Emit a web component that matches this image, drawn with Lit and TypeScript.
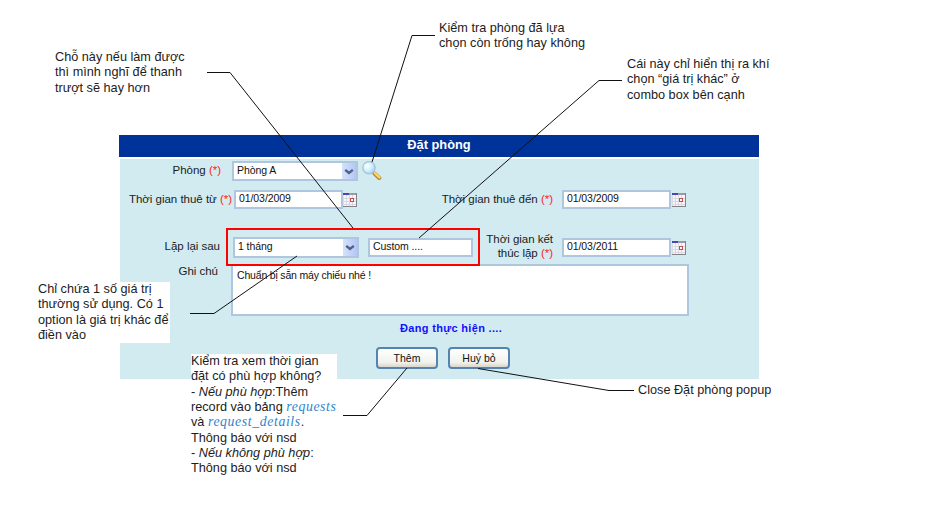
import { LitElement, html, css, svg } from "lit";
import { customElement, property } from "lit/decorators.js";

@customElement("calendar-icon")
class CalendarIcon extends LitElement {
  static styles = css`:host { display: block; width: 14px; height: 15px; } svg { display: block; }`;
  render() {
    return html`<svg width="14" height="15" viewBox="0 0 14 15" shape-rendering="crispEdges">
      <rect y="1" width="14" height="14" fill="#f7f6fa"/>
      <path d="M3.5 3v11M6.5 3v11M9.5 3v11M1 6.5h12M1 9.5h12M1 12.5h12" stroke="#d8d8e2"/>
      <path d="M.5 3v11" stroke="#dcdce8"/>
      <rect y="1" width="13" height="2" fill="#9d9b9f"/>
      <rect y="1" width="6" height="2" fill="#4646b4"/>
      <path d="M13.5 1v14M0 14.5h14" stroke="#858285"/>
      <rect x="7.5" y="6.5" width="3" height="3" fill="#fff" stroke="#c94b50"/>
    </svg>`;
  }
}

@customElement("search-icon")
class SearchIcon extends LitElement {
  static styles = css`:host { display: block; width: 20px; height: 20px; } svg { display: block; }`;
  render() {
    return html`<svg width="20" height="20" viewBox="0 0 20 20">
      <defs><radialGradient id="g" cx=".35" cy=".35" r=".7"><stop offset="0" stop-color="#fff"/><stop offset=".5" stop-color="#d5f1ff"/><stop offset="1" stop-color="#9bd3f5"/></radialGradient></defs>
      <path d="M12.500 12.500l4.800 4.500" stroke="#b5822f" stroke-width="4" stroke-linecap="round"/>
      <path d="M12.800 12.200l4.700 4.300" stroke="#fbd468" stroke-width="2.400" stroke-linecap="round"/>
      <circle cx="7" cy="6.800" r="6.200" fill="url(#g)" stroke="#a4c0d4" stroke-width="1.200"/>
    </svg>`;
  }
}

@customElement("text-field")
class TextField extends LitElement {
  @property() value = "";
  @property({ type: Boolean }) select = false;
  static styles = css`
    :host { display: flex; box-sizing: border-box; border: 2px solid #b0c6de; background: #fff; align-items: center; }
    span { flex: 1; padding: 0 0 2px 3px; font-size: 10.5px; line-height: 13px; letter-spacing: -.08px; white-space: nowrap; color: #111; }
    .arrow { width: 14px; align-self: stretch; display: flex; align-items: center; justify-content: center; background: linear-gradient(90deg, #d5e1fd, #b5c6f5); }
  `;
  render() {
    return html`<span>${this.value}</span>${this.select
      ? html`<div class="arrow"><svg width="10" height="7" viewBox="0 0 10 7"><path d="M1.200 1.800L5 5L8.800 1.800" fill="none" stroke="#4d6185" stroke-width="2.300"/></svg></div>`
      : ""}`;
  }
}

const lines = [
  "207,72.5 230,72.5 353,228",
  "435,35.5 412,35.5 372,162",
  "622,80.5 599,80.5 419,238",
  "190,313.5 214,313.5 297,256",
  "343,415.5 367,415.5 407,368",
  "634,390.500 609,390.500 478,368.500",
];

@customElement("app-root")
class AppRoot extends LitElement {
  static styles = css`
    :host { display: block; position: relative; width: 941px; height: 515px; overflow: hidden; background: #fff; font-family: "Liberation Sans", Arial, sans-serif; color: #1c1c1c; }
    .popup { width: 640px; padding: 135px 0 0 119px; }
    .title { height: 22px; line-height: 20px; background: #039; color: #fff; font-size: 12.800px; font-weight: bold; text-align: center; }
    .body { box-sizing: border-box; margin: 2px 0 0 1px; height: 220px; background: #d2ebf0; padding-top: 2px; }
    .row { display: flex; align-items: center; }
    .row1 { height: 20px; }
    .row2 { height: 19px; margin-top: 9px; }
    .row3 { height: 38px; margin-top: 19px; position: relative; z-index: 1; }
    .label { box-sizing: border-box; font-size: 11.5px; line-height: 14px; padding-bottom: 2px; text-align: right; white-space: nowrap; letter-spacing: -.02px; }
    .label i { font-style: normal; color: #f22; }
    .row1 .label { width: 101px; }
    .row1 text-field { width: 126px; height: 20px; margin: 0 4px 0 11px; }
    .row2 .from { width: 112px; }
    .row2 text-field, .row3 .until { width: 109px; height: 19px; }
    .row2 .start { margin-left: 2px; }
    .row2 .to { width: 196px; }
    .row2 .end { margin: 0 1px 0 9px; }
    .row3 .repeat { width: 100px; margin-right: 1px; }
    .group { box-sizing: border-box; display: flex; align-items: center; width: 254px; height: 38px; border: 2px solid #f00; margin-left: 5px; padding-left: 5px; }
    .group .period { width: 126px; height: 21px; }
    .group .custom { width: 105px; height: 19px; margin-left: 9px; }
    .row3 .finish { width: 73px; }
    .row3 .until { margin: 0 1px 0 9px; }
    .notes { display: flex; margin-top: -2px; }
    .notes .label { width: 98px; }
    .area { box-sizing: border-box; width: 458px; height: 52px; margin-left: 13px; border: 2px solid #b0c6de; background: #fff; padding: 2px 4px; font-size: 10.5px; line-height: 15px; letter-spacing: -.18px; color: #111; }
    .status { margin: 5px 0 0 280px; font-size: 11px; line-height: 15px; font-weight: bold; color: #11f; letter-spacing: .32px; }
    .buttons { display: flex; gap: 10px; margin: 11px 0 0 256px; }
    .button { box-sizing: border-box; width: 62px; height: 22px; border: 2px solid #5584b0; border-radius: 4px; background: linear-gradient(#fff, #f1f1ed 75%, #d8d6cc); padding: 0 0 1px; font: 10.500px/16px "Liberation Sans", sans-serif; color: #111; }
    .lines { position: absolute; inset: 0; z-index: 2; }
    .lines polyline { fill: none; stroke: #111; stroke-width: 1; }
    .callout { position: absolute; z-index: 3; font-size: 12.700px; line-height: 15.330px; white-space: nowrap; }
    .n1 { left: 55px; top: 50px; }
    .n2 { left: 439px; top: 21px; }
    .n3 { left: 627px; top: 57px; }
    .n4 { left: 38px; top: 282px; width: 132px; background: #fff; }
    .n5 { left: 191px; top: 354px; width: 146px; background: #fff; }
    .n6 { left: 638px; top: 383px; }
    .code { font-family: "Liberation Serif", serif; font-style: italic; color: #2e86cd; font-size: 13.800px; line-height: 1; letter-spacing: .6px; }
  `;
  render() {
    return html`
      <div class="popup">
        <div class="title">Đặt phòng</div>
        <div class="body">
          <div class="row row1">
            <div class="label">Phòng <i>(*)</i></div>
            <text-field select value="Phòng A"></text-field><search-icon></search-icon>
          </div>
          <div class="row row2">
            <div class="label from">Thời gian thuê từ <i>(*)</i></div>
            <text-field class="start" value="01/03/2009"></text-field><calendar-icon></calendar-icon>
            <div class="label to">Thời gian thuê đến <i>(*)</i></div>
            <text-field class="end" value="01/03/2009"></text-field><calendar-icon></calendar-icon>
          </div>
          <div class="row row3">
            <div class="label repeat">Lặp lại sau</div>
            <div class="group">
              <text-field class="period" select value="1 tháng"></text-field>
              <text-field class="custom" value="Custom ...."></text-field>
            </div>
            <div class="label finish">Thời gian kết<br>thúc lặp <i>(*)</i></div>
            <text-field class="until" value="01/03/2011"></text-field><calendar-icon></calendar-icon>
          </div>
          <div class="notes">
            <div class="label">Ghi chú</div>
            <div class="area">Chuẩn bị sẵn máy chiếu nhé !</div>
          </div>
          <div class="status">Đang thực hiện ....</div>
          <div class="buttons"><button class="button">Thêm</button><button class="button">Huỷ bỏ</button></div>
        </div>
      </div>
      <svg class="lines" width="941" height="515">${lines.map((p) => svg`<polyline points=${p} />`)}</svg>
      <div class="callout n1">Chỗ này nếu làm được<br>thì mình nghĩ để thanh<br>trượt sẽ hay hơn</div>
      <div class="callout n2">Kiểm tra phòng đã lựa<br>chọn còn trống hay không</div>
      <div class="callout n3">Cái này chỉ hiển thị ra khí<br>chọn “giá trị khác” ở<br>combo box bên cạnh</div>
      <div class="callout n4">Chỉ chứa 1 số giá trị<br>thường sử dụng. Có 1<br>option là giá trị khác để<br>điền vào</div>
      <div class="callout n5">Kiểm tra xem thời gian<br>đặt có phù hợp không?<br>- <em>Nếu phù hợp</em>:Thêm<br>record vào bảng <span class="code">requests</span><br>và <span class="code">request_details</span>.<br>Thông báo với nsd<br>- <em>Nếu không phù hợp</em>:<br>Thông báo với nsd</div>
      <div class="callout n6">Close Đặt phòng popup</div>`;
  }
}
